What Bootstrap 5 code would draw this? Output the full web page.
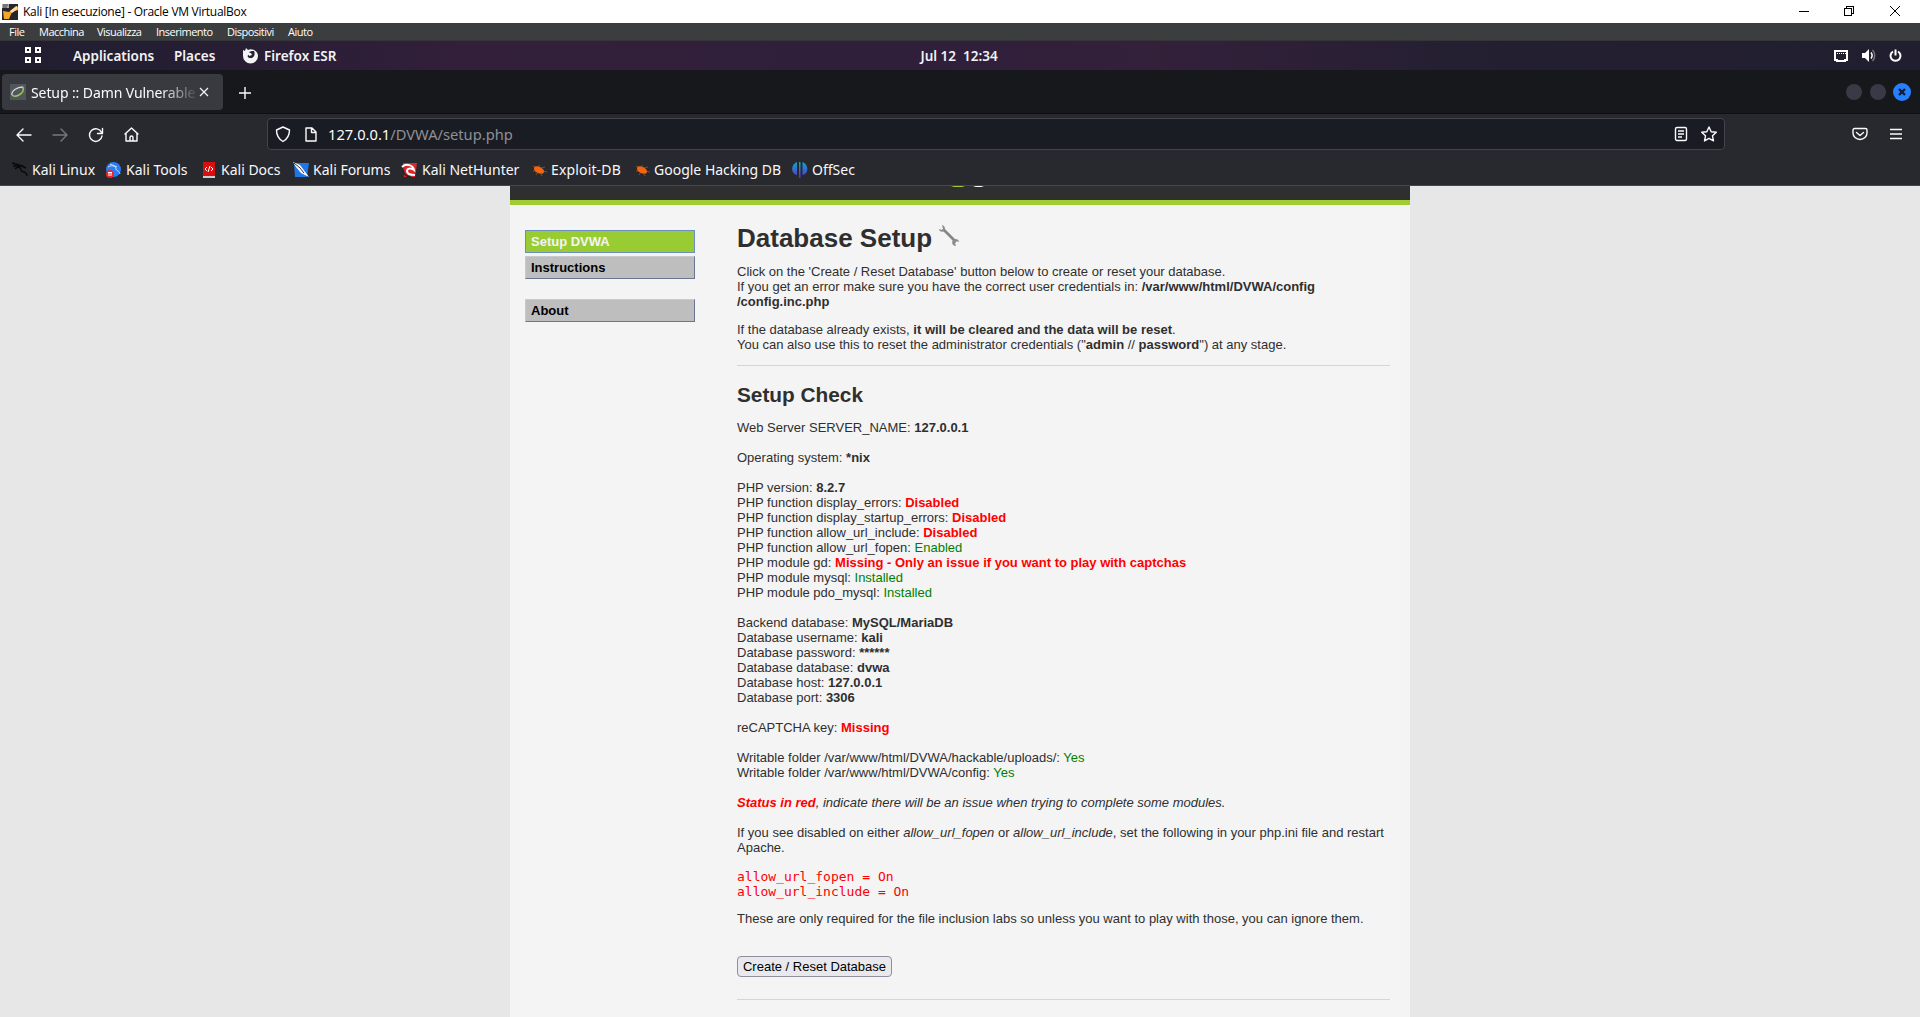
<!DOCTYPE html>
<html lang="it">
<head>
<meta charset="utf-8">
<title>Kali [In esecuzione] - Oracle VM VirtualBox</title>
<link href="https://cdn.jsdelivr.net/npm/bootstrap@5.3.0/dist/css/bootstrap.min.css" rel="stylesheet">
<script src="https://cdn.jsdelivr.net/npm/bootstrap@5.3.0/dist/js/bootstrap.bundle.min.js"></script>
<style>
html,body{height:100%;overflow:hidden}
body{font-family:"Noto Sans",sans-serif;background:#e7e7e7}
svg{display:block;flex:none}
.vb-title{height:23px;background:#fff;color:#000;font:12px/23px "Open Sans",sans-serif;padding:0 18px 0 2px}
.vb-title .cap{letter-spacing:-.28px;padding-left:5px}
.vb-title .close-x{margin-left:-14px}
.vb-menu{height:18px;background:#3c3d3e;border-bottom:1px solid #343536;color:#fff;font:11px/17px "Open Sans",sans-serif;padding-left:9px}
.vb-menu span{display:block;letter-spacing:-.5px}
.panel{height:29px;background:linear-gradient(90deg,#211e30 0,#261e33 200px,#331f3a 480px,#2f1f3b 900px,#33203a 1150px,#231f31 1500px,#211e30 100%);color:#f2f2f4;font-weight:600;font-size:13.5px;line-height:29px}
.panel span{padding-top:1px}
.tabs-strip{height:44px;background:#17181c;border-bottom:1px solid #0e0f12;padding:4px 8px 0 2px}
.ff-tab{width:221px;height:36px;border-radius:4px;background:#393a3f;padding-left:8px;color:#fbfbfe;font-size:14px;letter-spacing:-.1px}
.ff-tab .label{width:172px;padding-left:5px;overflow:hidden;white-space:nowrap;-webkit-mask-image:linear-gradient(90deg,#000 78%,transparent 101%);mask-image:linear-gradient(90deg,#000 78%,transparent 101%)}
.new-tab{margin:12px 0 0 15px}
.wm-dots{margin-top:8px}
.ff-nav{height:41px;background:#28292e;padding:4px 0 0}
.url-box{width:1458px;height:32px;background:#1a1c24;border:1px solid #43444b;border-radius:4px;color:#fbfbfe;font-size:14.7px}
.url-box .host{padding-top:1px}
.url-box .dim{color:#8f9095}
.marks{height:31px;background:#28292e;border-bottom:1px solid #47484d;color:#f8f8fb;font-size:14px;padding:0 0 1px 12px}
.marks div{white-space:nowrap}
.sheet{width:900px;height:831px;background:#f4f4f4;font:13px/15px "Liberation Sans",Arial,sans-serif;color:#2f2f2f}
.sheet-head{height:19px;background:#2f2f2f;border-bottom:5px solid #a1cc33}
.side{width:170px;margin:25px 42px 0 15px}
.side a{display:block;height:23px;background:#bebebe;border:1px solid;border-color:#c8cbce #68778f #68778f #c8cbce;color:#000;font-weight:700;line-height:21px;padding-left:5px;text-decoration:none;margin-bottom:3px}
.side a.on{background:#9c3;color:#f4f4f4;border-color:#6c8fbf}
.side a.gap{margin-top:20px}
.main-col{width:653px;padding-top:18px}
.main-col h1{font-size:26px;line-height:30px;font-weight:700;margin:0 0 11px;height:30px}
.main-col h1 svg{margin:2px 0 0 7px}
.main-col h2{font-size:20.8px;line-height:24px;font-weight:700;margin:17px 0 13px}
.main-col p{margin:0 0 13px}
.rule{height:1px;background:#c0d8ff}
.bad{color:#f00;font-weight:700}
.ok{color:#008000}
.main-col pre{font:13px/15px "DejaVu Sans Mono",monospace;color:#f00;margin:14px 0 12px;overflow:visible}
.go{width:155px;height:21px;border:1px solid #8f8f9d;border-radius:4px;background:#e9e9ed;color:#000;font:13px/19px "Liberation Sans",sans-serif;padding:0;display:block;margin:30px 0 22px}
</style>
</head>
<body class="d-flex flex-column">
<header class="vb-title d-flex align-items-center flex-shrink-0">
<svg width="16" height="17" viewBox="0 0 16 17"><rect y="1" width="16" height="16" fill="#26262b"/><path d="M2 9h5v6H2z" fill="#e98a1c"/><path d="M1 8l6 1 7-6 2 1v3l-6 2-3 7H2z" fill="#f3a62a"/><path d="M8 8l7-5v3l-5 4z" fill="#ffe0a0"/><path d="M0 1h7v4H0z" fill="#a9aaa8"/><path d="M1 2h5M1 4h4" stroke="#444"/></svg>
<span class="cap">Kali [In esecuzione] - Oracle VM VirtualBox</span>
<div class="d-flex align-items-center ms-auto">
<svg width="107" height="16" viewBox="0 0 107 16" fill="none" stroke="#000" shape-rendering="crispEdges"><path d="M2 7.500h10"/><path d="M47.500 4.500h7v7h-7zM49.500 4v-2h7v7h-2"/></svg>
<svg class="close-x" width="12" height="16" viewBox="0 0 12 16" stroke="#000"><path d="M0 2l10 10M10 2L0 12"/></svg>
</div>
</header>
<nav class="vb-menu d-flex flex-shrink-0">
<span style="width:30px">File</span><span style="width:58px">Macchina</span><span style="width:59px">Visualizza</span><span style="width:71px">Inserimento</span><span style="width:61px">Dispositivi</span><span>Aiuto</span>
</nav>
<div class="panel d-flex align-items-center flex-shrink-0">
<svg width="73" height="29" viewBox="0 0 73 29" fill="none" stroke="#fff" stroke-width="2"><path d="M26 7h4v4h-4zM36 7h4v4h-4zM26 17h4v4h-4zM36 17h4v4h-4z"/></svg>
<span style="width:101px">Applications</span><span style="width:68px">Places</span>
<svg width="22" height="18" viewBox="0 0 22 18"><path d="M1 3l2 1 1-3 2 2c4-2 10 1 10 6a7.500 7.500 0 0 1-15 0c0-2 0-4 0-6z" fill="#f4f4f6"/><path d="M12 4c2 4-1 8-4 7-2 0-3-2-2-3l3-1-2-2 3-1z" fill="#2b1f36"/><path d="M6 6l3 0 1 2-3 1z" fill="#f4f4f6"/></svg>
<span style="width:656.500px">Firefox ESR</span>
<span>Jul 12&nbsp; 12:34</span>
<div class="d-flex ms-auto align-items-center pe-3">
<svg width="76" height="16" viewBox="0 0 76 16" fill="none" stroke="#fff"><path d="M7 3h12v9h-2v1H9v-1H7z" stroke-width="2"/><path d="M9 5.500h9" stroke-dasharray="1 1"/><path d="M34 5h3l4-4v13l-4-4h-3z" fill="#fff" stroke="none"/><path d="M43 4.500c1.500 2 1.500 4 0 6" stroke-width="1.500"/><path d="M44.500 2c3 3 3 8 0 11" stroke="#77747f" stroke-width="1.500"/><path d="M65 3.500a5 5 0 1 0 5 0M67.500 1.500v6" stroke-width="2"/></svg>
</div>
</div>
<div class="tabs-strip d-flex flex-shrink-0">
<div class="ff-tab d-flex align-items-center">
<svg width="16" height="16" viewBox="0 0 16 16"><rect width="16" height="16" fill="#50565c"/><path d="M2 11C1 7 7 3 13 3" stroke="#d8dcd8" stroke-width="1.300" fill="none"/><path d="M2 11c3 3 13-1 11-8" stroke="#9cc45c" stroke-width="1.500" fill="none"/></svg>
<span class="label">Setup :: Damn Vulnerable W</span>
<svg width="12" height="12" viewBox="0 0 12 12" stroke="#f5f5f8" stroke-width="1.200"><path d="M2 2l8 8M10 2l-8 8"/></svg>
</div>
<svg width="14" height="14" viewBox="0 0 14 14" stroke="#fbfbfe" stroke-width="1.400" class="new-tab"><path d="M7 1v12M1 7h12"/></svg>
<svg width="68" height="20" viewBox="0 0 68 20" class="wm-dots ms-auto"><circle cx="10" cy="10" r="8" fill="#393a45"/><circle cx="34" cy="10" r="8" fill="#393a45"/><circle cx="58" cy="10" r="9" fill="#277fff"/><path d="M55 7l6 6M61 7l-6 6" stroke="#101c33" stroke-width="2.400"/></svg>
</div>
<div class="ff-nav d-flex flex-shrink-0">
<svg width="267" height="32" viewBox="0 0 267 32" fill="none" stroke="#fbfbfe" stroke-width="1.400" stroke-linecap="round" stroke-linejoin="round"><path d="M31 17H18M23 11l-6 6 6 6"/><path d="M53 17h13M61 11l6 6-6 6" stroke="#77787d"/><path d="M101.500 14.500A6.300 6.300 0 1 0 102 18M102.500 10.500v5h-5"/><path d="M125 16l6.500-6 6.500 6M126 15.500V23h11v-7.500M130 23v-3.500a1.500 1.500 0 0 1 3 0V23"/></svg>
<div class="url-box d-flex align-items-center">
<svg width="60" height="30" viewBox="0 0 60 30" fill="none" stroke="#fbfbfe" stroke-width="1.400" stroke-linejoin="round"><path d="M15 8l6.500 3c0 5-2 9-6.500 11.500C10.500 20 8.500 16 8.500 11z"/><path d="M38 9h6l4 4v9H38zM43.500 9v4.500H48"/></svg>
<span class="host">127.0.0.1<span class="dim">/DVWA/setup.php</span></span>
<svg width="50" height="30" viewBox="0 0 50 30" class="ms-auto" fill="none" stroke="#fbfbfe" stroke-width="1.400" stroke-linejoin="round"><rect x="1.500" y="8.500" width="11" height="13" rx="1.500"/><path d="M4 12h6M4 15h6M4 18h4"/><path d="M35 8l2.200 4.700 5.100.6-3.800 3.500 1 5.100-4.500-2.500-4.500 2.500 1-5.100-3.800-3.500 5.100-.6z"/></svg>
</div>
<svg width="55" height="32" viewBox="0 0 55 32" class="ms-auto me-3" fill="none" stroke="#fbfbfe" stroke-width="1.400" stroke-linecap="round" stroke-linejoin="round"><path d="M5.500 10.500h11a1.500 1.500 0 0 1 1.500 1.500v3a7 6.500 0 0 1-14 0v-3A1.500 1.500 0 0 1 5.500 10.500zM7.500 14.500l3.500 3 3.500-3"/><path d="M41 11.500h12M41 16h12M41 20.500h12" stroke-linecap="butt"/></svg>
</div>
<div class="marks d-flex align-items-center flex-shrink-0">
<svg width="20" height="16" viewBox="0 0 20 16" fill="none" stroke="#08090b" stroke-width="1.400"><path d="M0 1l7 2 4 1M1 4l8 0M3 7c3-3 6-2 6 1s6 0 6 6M10 4l4 2"/></svg><div style="width:74px">Kali Linux</div>
<svg width="20" height="16" viewBox="0 0 20 16"><circle cx="7.500" cy="7.500" r="7.500" fill="#2a7df5"/><path d="M2 5c5-3 8 0 8 2s3 1 4 5M4 2l7 3" stroke="#cfe2ff" fill="none"/><circle cx="4" cy="12" r="4" fill="#e8262c"/><path d="M2 10.500h4M3 11v3M5 11v3" stroke="#fff"/></svg><div style="width:77px">Kali Tools</div>
<svg width="18" height="16" viewBox="0 0 18 16"><path d="M0 0h12v14H0z" fill="#d90f0f"/><path d="M0 14h12v2H0z" fill="#ccc"/><path d="M4 5L2 7l2 2M8 5l2 2-2 2M7 4L5 10" stroke="#fff" fill="none"/></svg><div style="width:72px">Kali Docs</div>
<svg width="20" height="16" viewBox="0 0 20 16"><path d="M1 1h15l-2 14H2z" fill="#2277e8"/><path d="M0 0l7 3 3 4 6 8-8-4-5-6z" fill="#fff"/><path d="M1 1l6 5 4 5" stroke="#333" fill="none"/></svg><div style="width:88px">Kali Forums</div>
<svg width="21" height="16" viewBox="0 0 21 16"><path d="M2 1h14l-2 14H3z" fill="#e0252d"/><path d="M1 5C5 1 12 3 13 8c-3-2-7-2-7 1s4 4 8 4" stroke="#fff" stroke-width="2" fill="none"/><path d="M2 8c1 4 4 7 8 7" stroke="#222" stroke-width="1.500" fill="none"/></svg><div style="width:110px">Kali NetHunter</div>
<svg width="19" height="14" viewBox="0 0 19 14"><path d="M1 3l4 2M1 8l4 0M4 12l2-3M9 11l1 2M10 8l5 1M9 5l4-1M6 4l2-2" stroke="#a84c19" stroke-width=".8"/><ellipse cx="7" cy="7" rx="5.500" ry="3.200" transform="rotate(28 7 7)" fill="#f26312"/></svg><div style="width:84px;letter-spacing:.15px">Exploit-DB</div>
<svg width="19" height="14" viewBox="0 0 19 14"><path d="M1 3l4 2M1 8l4 0M4 12l2-3M9 11l1 2M10 8l5 1M9 5l4-1M6 4l2-2" stroke="#a84c19" stroke-width=".8"/><ellipse cx="7" cy="7" rx="5.500" ry="3.200" transform="rotate(28 7 7)" fill="#f26312"/></svg><div style="width:138px">Google Hacking DB</div>
<svg width="20" height="16" viewBox="0 0 20 16"><defs><linearGradient id="og" x2="0" y2="1"><stop stop-color="#14a5c0"/><stop offset="1" stop-color="#5a2fd6"/></linearGradient></defs><path d="M5 0v13C-1 12-2 3 5 0zM7 0h1.500v16H7zM10.500 0c7 3 6 12 0 13z" fill="url(#og)"/></svg><div>OffSec</div>
</div>
<main class="flex-grow-1 d-flex justify-content-center">
<div class="sheet flex-shrink-0">
<div class="sheet-head"><svg width="900" height="2" viewBox="0 0 900 2"><path d="M441 0h14l-3 1h-8z" fill="#a1cc33"/><path d="M463 0h11l-3 1h-5z" fill="#fff"/></svg></div>
<div class="d-flex">
<nav class="side flex-shrink-0"><a class="on" href="#">Setup DVWA</a><a href="#">Instructions</a><a class="gap" href="#">About</a></nav>
<section class="main-col flex-shrink-0">
<h1 class="d-flex">Database Setup<svg width="22" height="22" viewBox="0 0 22 22"><path d="M4 4l13 13" stroke="#858585" stroke-width="2.600"/><path d="M3 0c3 1 4 4 2 6S0 6 0 4l3 1 1-1zM14 15c2-2 6-1 6 2l-3-1-1 2 1 3c-3 0-5-3-3-6z" fill="#8c8c8c"/></svg></h1>
<p>Click on the 'Create / Reset Database' button below to create or reset your database.<br>If you get an error make sure you have the correct user credentials in: <b>/var/www/html/DVWA/config<br>/config.inc.php</b></p>
<p>If the database already exists, <b>it will be cleared and the data will be reset</b>.<br>You can also use this to reset the administrator credentials ("<b>admin</b> // <b>password</b>") at any stage.</p>
<div class="rule"></div>
<h2>Setup Check</h2>
<p>Web Server SERVER_NAME: <b>127.0.0.1</b><br><br>Operating system: <b>*nix</b><br><br>PHP version: <b>8.2.7</b><br>
PHP function display_errors: <span class="bad">Disabled</span><br>
PHP function display_startup_errors: <span class="bad">Disabled</span><br>
PHP function allow_url_include: <span class="bad">Disabled</span><br>
PHP function allow_url_fopen: <span class="ok">Enabled</span><br>
PHP module gd: <span class="bad">Missing - Only an issue if you want to play with captchas</span><br>
PHP module mysql: <span class="ok">Installed</span><br>
PHP module pdo_mysql: <span class="ok">Installed</span><br><br>
Backend database: <b>MySQL/MariaDB</b><br>
Database username: <b>kali</b><br>
Database password: <b>******</b><br>
Database database: <b>dvwa</b><br>
Database host: <b>127.0.0.1</b><br>
Database port: <b>3306</b><br><br>
reCAPTCHA key: <span class="bad">Missing</span><br><br>
Writable folder /var/www/html/DVWA/hackable/uploads/: <span class="ok">Yes</span><br>
Writable folder /var/www/html/DVWA/config: <span class="ok">Yes</span><br><br>
<i><span class="bad">Status in red</span>, indicate there will be an issue when trying to complete some modules.</i><br><br>
If you see disabled on either <i>allow_url_fopen</i> or <i>allow_url_include</i>, set the following in your php.ini file and restart Apache.</p>
<pre>allow_url_fopen = On
allow_url_include = On</pre>
<p>These are only required for the file inclusion labs so unless you want to play with those, you can ignore them.</p>
<button class="go">Create / Reset Database</button>
<div class="rule"></div>
</section>
</div>
</div>
</main>
</body>
</html>
